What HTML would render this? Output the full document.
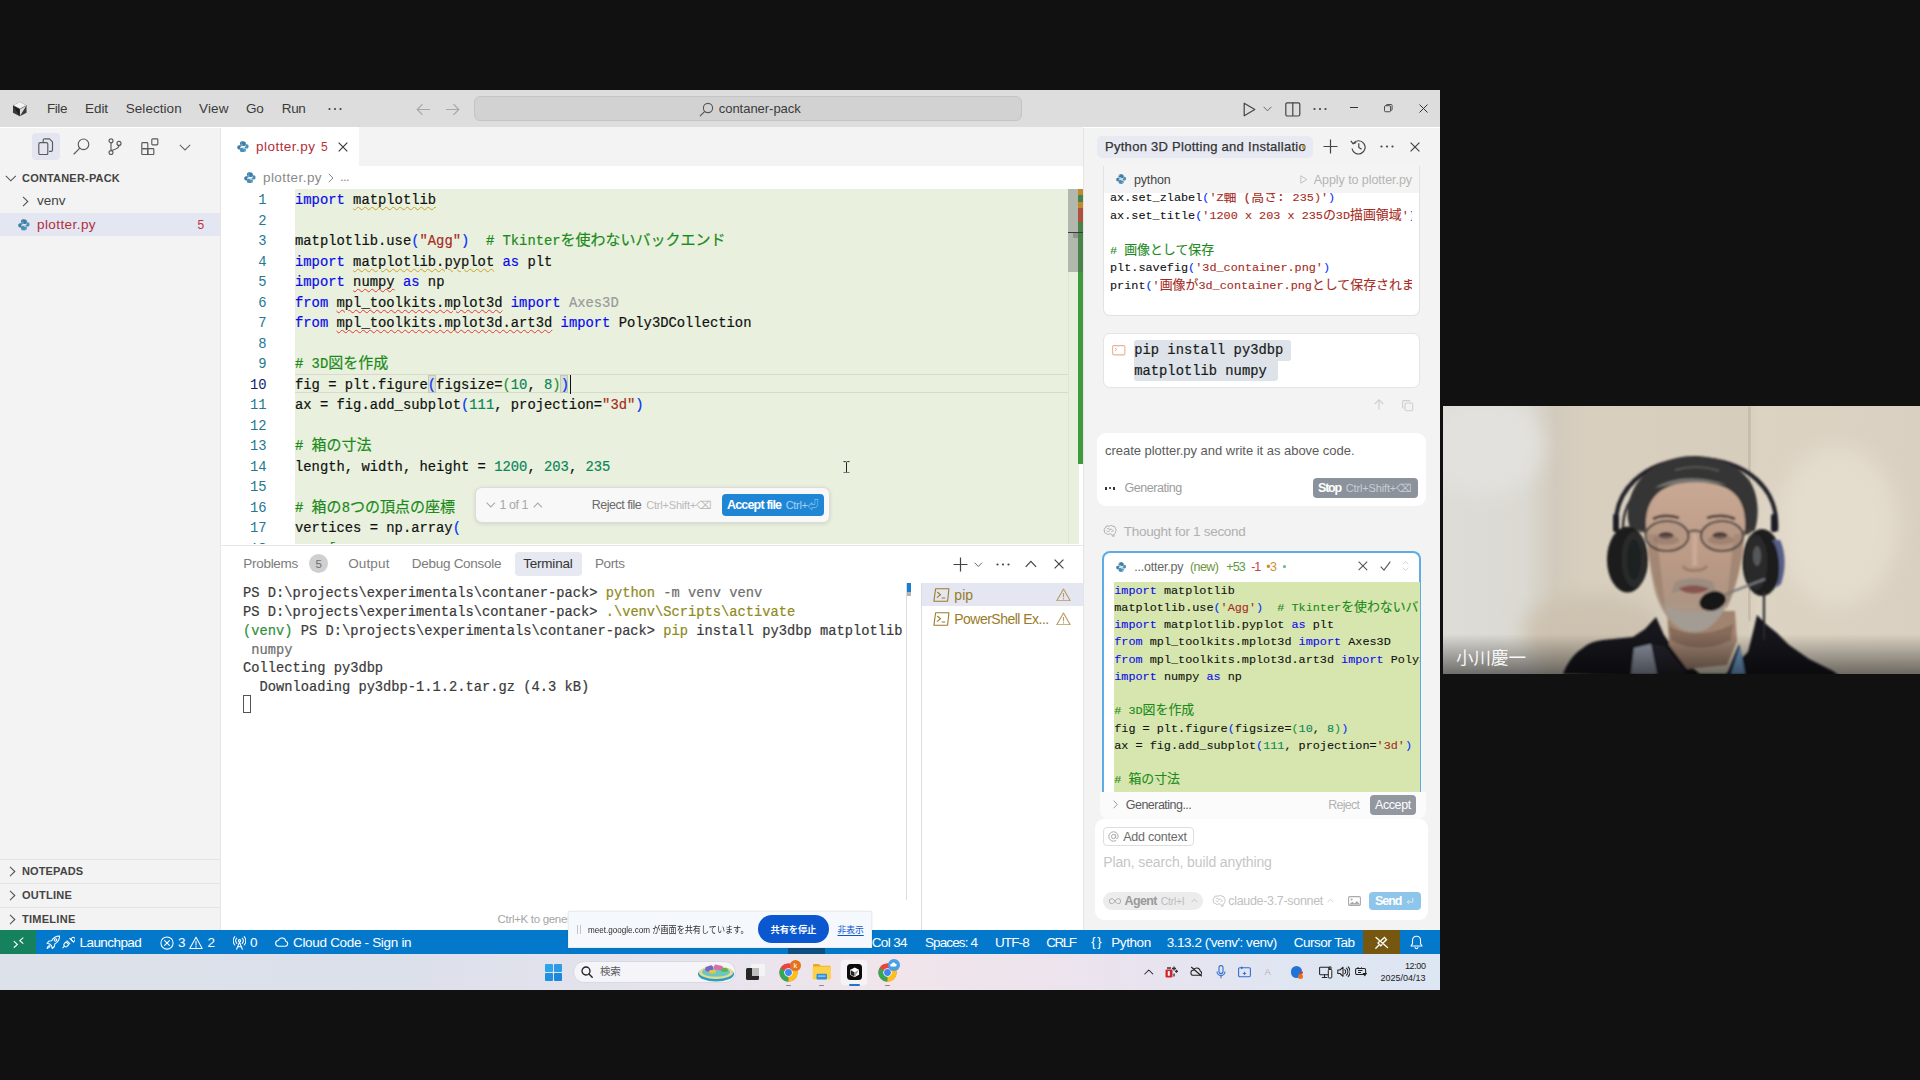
<!DOCTYPE html>
<html lang="ja"><head><meta charset="utf-8"><title>contaner-pack</title>
<style>
*{margin:0;padding:0;box-sizing:border-box}
html,body{width:1920px;height:1080px;overflow:hidden;background:#111}
body{position:relative;font-family:"Liberation Sans","Noto Sans CJK JP",sans-serif;font-size:13px;color:#333}
.a{position:absolute;display:block}
.t{position:absolute;white-space:pre;line-height:24px;height:24px;margin-top:-11.8px}
.m{font-family:"Liberation Mono","Noto Sans CJK JP",monospace}
.clip{position:absolute;overflow:hidden}
.code{position:absolute;white-space:pre;font-family:"Liberation Mono","Noto Sans CJK JP",monospace;color:#111;-webkit-text-stroke:.2px}
.code i{font-style:normal}
.ed{font-size:13.83px;line-height:20.5px}
.ed .j{font-size:15px;line-height:0}
.k{color:#0a0aee}.s{color:#a62b22}.n{color:#098658}.c{color:#1b8a1b}.b1{color:#0431fa}.b2{color:#319331}.g{color:#9a9a9a}
.wy{text-decoration:underline wavy #c9a227 1px;text-underline-offset:2px}
.wr{text-decoration:underline wavy #e03a3a 1px;text-underline-offset:2px}
.ln{position:absolute;text-align:right;white-space:pre;font-family:"Liberation Mono",monospace;font-size:13.83px;line-height:20.5px;color:#237893}
.tm{font-size:13.745px;line-height:18.75px;color:#3a3a3a}
.y{color:#8f8a1c}.a2{color:#6e6e6e}.gv{color:#2f8f3a}
.cc{font-size:11.83px;line-height:17.5px;-webkit-text-stroke:.1px}
.cc .j{font-size:12.9px;line-height:0}
.dc{font-size:11.82px;line-height:17.22px;-webkit-text-stroke:.1px}
.dc .j{font-size:12.9px;line-height:0}
.pp{font-size:13.8px;line-height:20.5px;color:#1a1a1a}

</style></head>
<body>
<div class="a" style="left:0px;top:90px;width:1440px;height:900px;background:#ffffff;"></div>
<div class="a" style="left:0px;top:90px;width:1440px;height:37.2px;background:#dddddd;"></div>
<svg class="a" style="left:11.5px;top:101px;" width="15.5" height="16" viewBox="0 0 16 16"><path d="M8 .6L15 4.3v7.6L8 15.5 1 11.9V4.3z" fill="#3a3a3a"></path><path d="M8 .6L15 4.3 8 8 1 4.3z" fill="#f2f2f2"></path><path d="M8 8l7-3.7L8 15.5z" fill="#d9d9d9"></path><path d="M8 8v7.5L1 4.3z" fill="#1e1e1e"></path><path d="M1 4.3L8 8l7-3.7" fill="none" stroke="#555" stroke-width=".5"></path></svg>
<span class="t" style="left: 47px; top: 109px; font-size: 13.5px; color: rgb(59, 59, 59); letter-spacing: -0.441px;">File</span>
<span class="t" style="left: 85px; top: 109px; font-size: 13.5px; color: rgb(59, 59, 59); letter-spacing: -0.066px;">Edit</span>
<span class="t" style="left: 125.75px; top: 109px; font-size: 13.5px; color: rgb(59, 59, 59); letter-spacing: 0.05px;">Selection</span>
<span class="t" style="left: 199px; top: 109px; font-size: 13.5px; color: rgb(59, 59, 59); letter-spacing: 0.18px;">View</span>
<span class="t" style="left: 246px; top: 109px; font-size: 13.5px; color: rgb(59, 59, 59); letter-spacing: -0.133px;">Go</span>
<span class="t" style="left: 281.75px; top: 109px; font-size: 13.5px; color: rgb(59, 59, 59); letter-spacing: -0.339px;">Run</span>
<svg class="a" style="left:328px;top:106px;" width="14" height="6" viewBox="0 0 14 6"><circle cx="1.5" cy="3" r="1.1" fill="#444"></circle><circle cx="7" cy="3" r="1.1" fill="#444"></circle><circle cx="12.5" cy="3" r="1.1" fill="#444"></circle></svg>
<svg class="a" style="left:415.5px;top:103px;" width="15" height="13" viewBox="0 0 15 13"><path d="M14 6.5H1.5M6.5 1.2L1.2 6.5l5.3 5.3" fill="none" stroke="#a8a8a8" stroke-width="1.2"></path></svg>
<svg class="a" style="left:444.5px;top:103px;" width="15" height="13" viewBox="0 0 15 13"><path d="M1 6.5h12.5M8.5 1.2l5.3 5.3-5.3 5.3" fill="none" stroke="#a8a8a8" stroke-width="1.2"></path></svg>
<div class="a" style="left:473.5px;top:96px;width:548.5px;height:25px;background:#d2d2d2;border:1px solid #c4c4c4;border-radius:6px"></div>
<svg class="a" style="left:699px;top:101.5px;" width="15" height="15" viewBox="0 0 15 15"><circle cx="9" cy="6" r="4.6" fill="none" stroke="#555" stroke-width="1.1"></circle><path d="M5.8 9.4L1 14.2" stroke="#555" stroke-width="1.2"></path></svg>
<span class="t" style="left: 718.75px; top: 109px; font-size: 13px; color: rgb(59, 59, 59); letter-spacing: -0.03px;">contaner-pack</span>
<svg class="a" style="left:1243px;top:102px;" width="13" height="15" viewBox="0 0 13 15"><path d="M1.2 1.2v12.6l10.6-6.3z" fill="none" stroke="#444" stroke-width="1.2" stroke-linejoin="round"></path></svg>
<svg class="a" style="left:1262.5px;top:106px;" width="9" height="6" viewBox="0 0 9 6"><path d="M.6 .8l3.9 4 3.9-4" fill="none" stroke="#666" stroke-width="1"></path></svg>
<svg class="a" style="left:1284.5px;top:101.5px;" width="16" height="15" viewBox="0 0 16 15"><rect x=".8" y=".8" width="14" height="13.2" rx="1.5" fill="none" stroke="#444" stroke-width="1.2"></rect><path d="M7.8 .8v13.2" stroke="#444" stroke-width="1.2"></path></svg>
<svg class="a" style="left:1313px;top:106px;" width="14" height="6" viewBox="0 0 14 6"><circle cx="1.5" cy="3" r="1.1" fill="#444"></circle><circle cx="7" cy="3" r="1.1" fill="#444"></circle><circle cx="12.5" cy="3" r="1.1" fill="#444"></circle></svg>
<div class="a" style="left:1350px;top:107px;width:8px;height:1px;background:#333;"></div>
<svg class="a" style="left:1384px;top:104px;" width="8.6" height="8.6" viewBox="0 0 10 10"><rect x=".6" y="2" width="7" height="7" rx="1.2" fill="none" stroke="#333" stroke-width="1"></rect><path d="M2.6 2V1.6c0-.6.4-1 1-1h4.8c.6 0 1 .4 1 1v4.8c0 .6-.4 1-1 1H7.6" fill="none" stroke="#333" stroke-width="1"></path></svg>
<svg class="a" style="left:1418.5px;top:104px;" width="9" height="9" viewBox="0 0 9 9"><path d="M.5 .5l8 8M8.500 .5l-8 8" stroke="#333" stroke-width="1"></path></svg>
<div class="a" style="left:0px;top:127.5px;width:220.7px;height:802.5px;background:#f3f3f3;"></div>
<div class="a" style="left:220.2px;top:127.5px;width:0.8px;height:802.5px;background:#e7e7e7;"></div>
<div class="a" style="left:32.3px;top:133px;width:27.4px;height:27px;background:#e3e5f0;border-radius:4px"></div>
<svg class="a" style="left:37.5px;top:137.5px;" width="16" height="17.5" viewBox="0 0 16 17.5"><path d="M5.2 3.8V2.2c0-.8.6-1.4 1.400-1.400h4.900l3 3v8.200c0 .8-.6 1.400-1.400 1.400h-1.600" fill="none" stroke="#5a5a5a" stroke-width="1.15" stroke-linejoin="round" stroke-linecap="round"></path><path d="M2.200 4.600h6.200c.8 0 1.400.6 1.400 1.400v9.200c0 .8-.6 1.400-1.400 1.400H2.200c-.8 0-1.400-.6-1.400-1.400V6c0-.8.6-1.400 1.400-1.400z" fill="none" stroke="#5a5a5a" stroke-width="1.15" stroke-linejoin="round" stroke-linecap="round"></path></svg>
<svg class="a" style="left:72.5px;top:137.5px;" width="17" height="17" viewBox="0 0 17 17"><circle cx="10.5" cy="6.3" r="5.300" fill="none" stroke="#5a5a5a" stroke-width="1.15" stroke-linejoin="round" stroke-linecap="round"></circle><path d="M6.800 10.200L1 16" fill="none" stroke="#5a5a5a" stroke-width="1.15" stroke-linejoin="round" stroke-linecap="round"></path></svg>
<svg class="a" style="left:108px;top:137.5px;" width="14" height="17.5" viewBox="0 0 14 17.5"><circle cx="3" cy="2.800" r="2" fill="none" stroke="#5a5a5a" stroke-width="1.15" stroke-linejoin="round" stroke-linecap="round"></circle><circle cx="3" cy="14.600" r="2" fill="none" stroke="#5a5a5a" stroke-width="1.15" stroke-linejoin="round" stroke-linecap="round"></circle><circle cx="11" cy="5.400" r="2" fill="none" stroke="#5a5a5a" stroke-width="1.15" stroke-linejoin="round" stroke-linecap="round"></circle><path d="M3 4.800v7.800M11 7.400c0 3.200-3.500 3.600-7.400 5" fill="none" stroke="#5a5a5a" stroke-width="1.15" stroke-linejoin="round" stroke-linecap="round"></path></svg>
<svg class="a" style="left:140.5px;top:137.5px;" width="18" height="17.5" viewBox="0 0 18 17.5"><rect x=".8" y="4.600" width="6" height="6" rx=".8" fill="none" stroke="#5a5a5a" stroke-width="1.15" stroke-linejoin="round" stroke-linecap="round"></rect><rect x=".8" y="10.600" width="6" height="6" rx=".8" fill="none" stroke="#5a5a5a" stroke-width="1.15" stroke-linejoin="round" stroke-linecap="round"></rect><rect x="6.800" y="10.600" width="6" height="6" rx=".8" fill="none" stroke="#5a5a5a" stroke-width="1.15" stroke-linejoin="round" stroke-linecap="round"></rect><rect x="10.800" y=".8" width="6" height="6" rx=".8" fill="none" stroke="#5a5a5a" stroke-width="1.15" stroke-linejoin="round" stroke-linecap="round"></rect></svg>
<svg class="a" style="left:178.5px;top:143.5px;" width="12" height="7" viewBox="0 0 12 7"><path d="M.8 .8l5.2 5.200 5.200-5.200" fill="none" stroke="#666" stroke-width="1.1"></path></svg>
<svg class="a" style="left:5px;top:174.5px;" width="12" height="7" viewBox="0 0 12 7"><path d="M.8 .8l5 5 5-5" fill="none" stroke="#555" stroke-width="1.1"></path></svg>
<span class="t" style="left: 22px; top: 178px; font-size: 11px; color: rgb(68, 68, 68); font-weight: 700; letter-spacing: 0.19px;">CONTANER-PACK</span>
<svg class="a" style="left:21.5px;top:195.5px;" width="7" height="11" viewBox="0 0 7 11"><path d="M1 .8l4.800 4.700L1 10.200" fill="none" stroke="#555" stroke-width="1.1"></path></svg>
<span class="t" style="left: 37px; top: 201px; font-size: 13.5px; color: rgb(68, 68, 68); letter-spacing: -0.008px;">venv</span>
<div class="a" style="left:0px;top:213px;width:220.2px;height:22.7px;background:#e4e6f1;"></div>
<svg class="a" style="left:18px;top:218.8px;" width="11.8" height="11.8" viewBox="0 0 16 16"><path fill="#3d7ea6" fill-rule="evenodd" d="M7.900 .4C5.500 .4 4 1.300 4 3v2h4v.7H2.800C1.200 5.700 .300 7 .300 8.600c0 1.700.9 2.900 2.400 2.900h1.700V9.300c0-1.400 1.100-2.500 2.500-2.500h3.200c1.100 0 1.900-.8 1.900-1.900V3c0-1.600-1.600-2.600-4.100-2.600zM5.800 1.900a.65.65 0 110 1.300.65.65 0 010-1.300z"></path><path fill="#4a8fb8" fill-rule="evenodd" transform="rotate(180 8 8)" d="M7.900 .4C5.500 .4 4 1.300 4 3v2h4v.7H2.800C1.200 5.700 .300 7 .300 8.600c0 1.700.9 2.900 2.400 2.900h1.700V9.300c0-1.400 1.100-2.500 2.500-2.500h3.200c1.100 0 1.900-.8 1.900-1.900V3c0-1.600-1.600-2.600-4.100-2.600zM5.800 1.900a.65.65 0 110 1.300.65.65 0 010-1.300z"></path></svg>
<span class="t" style="left: 37px; top: 224.5px; font-size: 13.5px; color: rgb(176, 48, 58); letter-spacing: 0.42px;">plotter.py</span>
<span class="t" style="left: 197.5px; top: 224.5px; font-size: 12px; color: rgb(192, 48, 58); letter-spacing: -0.188px;">5</span>
<div class="a" style="left:0px;top:859.25px;width:220.2px;height:1px;background:#e2e2e2;"></div>
<svg class="a" style="left:8.5px;top:865.75px;" width="7" height="11" viewBox="0 0 7 11"><path d="M1 .8l4.800 4.700L1 10.200" fill="none" stroke="#555" stroke-width="1.1"></path></svg>
<span class="t" style="left: 22px; top: 870.85px; font-size: 11px; color: rgb(68, 68, 68); font-weight: 700; letter-spacing: 0.117px;">NOTEPADS</span>
<div class="a" style="left:0px;top:883.25px;width:220.2px;height:1px;background:#e2e2e2;"></div>
<svg class="a" style="left:8.5px;top:889.75px;" width="7" height="11" viewBox="0 0 7 11"><path d="M1 .8l4.800 4.700L1 10.200" fill="none" stroke="#555" stroke-width="1.1"></path></svg>
<span class="t" style="left: 22px; top: 894.85px; font-size: 11px; color: rgb(68, 68, 68); font-weight: 700; letter-spacing: 0.246px;">OUTLINE</span>
<div class="a" style="left:0px;top:907px;width:220.2px;height:1px;background:#e2e2e2;"></div>
<svg class="a" style="left:8.5px;top:913.5px;" width="7" height="11" viewBox="0 0 7 11"><path d="M1 .8l4.800 4.700L1 10.200" fill="none" stroke="#555" stroke-width="1.1"></path></svg>
<span class="t" style="left: 22px; top: 918.6px; font-size: 11px; color: rgb(68, 68, 68); font-weight: 700; letter-spacing: 0.27px;">TIMELINE</span>
<div class="a" style="left:221px;top:127.2px;width:862px;height:38.4px;background:#f3f3f3;"></div>
<div class="a" style="left:221px;top:127.2px;width:137.5px;height:38.4px;background:#ffffff;"></div>
<svg class="a" style="left:237px;top:140.5px;" width="11.8" height="11.8" viewBox="0 0 16 16"><path fill="#3d7ea6" fill-rule="evenodd" d="M7.900 .4C5.500 .4 4 1.300 4 3v2h4v.7H2.800C1.200 5.700 .300 7 .300 8.600c0 1.700.9 2.900 2.400 2.900h1.700V9.300c0-1.400 1.100-2.500 2.500-2.500h3.200c1.100 0 1.900-.8 1.900-1.900V3c0-1.600-1.600-2.600-4.100-2.600zM5.800 1.900a.65.65 0 110 1.300.65.65 0 010-1.300z"></path><path fill="#4a8fb8" fill-rule="evenodd" transform="rotate(180 8 8)" d="M7.900 .4C5.500 .4 4 1.300 4 3v2h4v.7H2.800C1.200 5.700 .300 7 .300 8.600c0 1.700.9 2.900 2.400 2.900h1.700V9.300c0-1.400 1.100-2.500 2.500-2.500h3.200c1.100 0 1.900-.8 1.900-1.900V3c0-1.600-1.600-2.600-4.100-2.600zM5.800 1.900a.65.65 0 110 1.300.65.65 0 010-1.300z"></path></svg>
<span class="t" style="left: 256px; top: 147px; font-size: 13.5px; color: rgb(176, 48, 58); letter-spacing: 0.47px;">plotter.py</span>
<span class="t" style="left: 321px; top: 147px; font-size: 12px; color: rgb(192, 48, 58); letter-spacing: -0.188px;">5</span>
<svg class="a" style="left:338px;top:142px;" width="10" height="10" viewBox="0 0 10 10"><path d="M.7 .7l8.600 8.600M9.300 .7L.7 9.300" stroke="#333" stroke-width="1.1"></path></svg>
<div class="a" style="left:221px;top:165.6px;width:862px;height:23.6px;background:#ffffff;"></div>
<svg class="a" style="left:244px;top:171.5px;" width="11.8" height="11.8" viewBox="0 0 16 16"><path fill="#3d7ea6" fill-rule="evenodd" d="M7.900 .4C5.500 .4 4 1.300 4 3v2h4v.7H2.800C1.200 5.700 .300 7 .300 8.600c0 1.700.9 2.900 2.400 2.900h1.700V9.300c0-1.400 1.100-2.500 2.500-2.500h3.200c1.100 0 1.900-.8 1.900-1.900V3c0-1.600-1.600-2.600-4.100-2.600zM5.800 1.900a.65.65 0 110 1.300.65.65 0 010-1.300z"></path><path fill="#4a8fb8" fill-rule="evenodd" transform="rotate(180 8 8)" d="M7.900 .4C5.500 .4 4 1.300 4 3v2h4v.7H2.800C1.200 5.700 .300 7 .300 8.600c0 1.700.9 2.900 2.400 2.900h1.700V9.300c0-1.400 1.100-2.500 2.500-2.500h3.200c1.100 0 1.900-.8 1.900-1.900V3c0-1.600-1.600-2.600-4.100-2.600zM5.800 1.900a.65.65 0 110 1.300.65.65 0 010-1.300z"></path></svg>
<span class="t" style="left: 263px; top: 178px; font-size: 13.5px; color: rgb(138, 138, 138); letter-spacing: 0.42px;">plotter.py</span>
<svg class="a" style="left:328px;top:173px;" width="6" height="10" viewBox="0 0 6 10"><path d="M.8 .8l4.2 4.200L.8 9.200" fill="none" stroke="#8a8a8a" stroke-width="1"></path></svg>
<span class="t" style="left: 340px; top: 177px; font-size: 13px; color: rgb(138, 138, 138); letter-spacing: -0.615px;">...</span>
<div class="clip" style="left:221px;top:189.2px;width:862px;height:355.3px;background:#fff">
<div class="a" style="left:73.5px;top:0;width:784px;height:356px;background:#e9f1de"></div>
<div class="a" style="left:73.5px;top:185px;width:774px;height:19px;border-top:1px solid #d6dccb;border-bottom:1px solid #d6dccb"></div>
<div class="a" style="left:206.5px;top:186px;width:8.800px;height:18px;background:#d9dfd0;border:1px solid #c3c9ba"></div>
<div class="a" style="left:338.700px;top:186px;width:8.800px;height:18px;background:#d9dfd0;border:1px solid #c3c9ba"></div>
<div class="ln" style="left:0;top:1.2px;width:45.5px">1
2
3
4
5
6
7
8
9
10
11
12
13
14
15
16
17
18</div>
<div class="ln" style="left:0;top:185.7px;width:45.5px;color:#0b216f;background:#fff">10</div>
<div class="code ed" style="left:74px;top:1.2px"><i class="k">import</i> <i class="wy">matplotlib</i>

matplotlib.use<i class="b1">(</i><i class="s">"Agg"</i><i class="b1">)</i>  <i class="c"># Tkinter<i class="j">を使わないバックエンド</i></i>
<i class="k">import</i> <i class="wy">matplotlib.pyplot</i> <i class="k">as</i> plt
<i class="k">import</i> <i class="wr">numpy</i> <i class="k">as</i> np
<i class="k">from</i> <i class="wr">mpl_toolkits.mplot3d</i> <i class="k">import</i> <i class="g">Axes3D</i>
<i class="k">from</i> <i class="wr">mpl_toolkits.mplot3d.art3d</i> <i class="k">import</i> Poly3DCollection

<i class="c"># 3D<i class="j">図を作成</i></i>
fig = plt.figure<i class="b1">(</i>figsize=<i class="b2">(</i><i class="n">10</i>, <i class="n">8</i><i class="b2">)</i><i class="b1">)</i>
ax = fig.add_subplot<i class="b1">(</i><i class="n">111</i>, projection=<i class="s">"3d"</i><i class="b1">)</i>

<i class="c"># <i class="j">箱の寸法</i></i>
length, width, height = <i class="n">1200</i>, <i class="n">203</i>, <i class="n">235</i>

<i class="c"># <i class="j">箱の</i>8<i class="j">つの頂点の座標</i></i>
vertices = np.array<i class="b1">(</i>
    <i class="b2">[</i></div>
<div class="a" style="left:348.5px;top:185.5px;width:1.5px;height:19px;background:#111"></div>
<div class="a" style="left:847px;top:0;width:1px;height:356px;background:#dfe6d4"></div>
<div class="a" style="left:847.2px;top:0;width:10px;height:82.5px;background:#b3b8ae"></div>
<div class="a" style="left:857px;top:0;width:5px;height:275.3px;background:#3d9a3d"></div>
<div class="a" style="left:857px;top:0;width:5px;height:82.5px;background:#4b8249"></div>
<div class="a" style="left:857px;top:0;width:5px;height:5.600px;background:#c08a2c"></div>
<div class="a" style="left:857px;top:12.800px;width:5px;height:5.800px;background:#c08a2c"></div>
<div class="a" style="left:857px;top:18.600px;width:5px;height:14.300px;background:#ad5040"></div>
<div class="a" style="left:847.2px;top:42.800px;width:14.800px;height:1.2px;background:#3a3a3a"></div>
<div class="a" style="left:852px;top:44px;width:5px;height:4.500px;background:#8f978d"></div>
</div>
<div class="a" style="left:474.5px;top:486.5px;width:355.5px;height:36px;background:#f8f8f8;border:1px solid #dcdcdc;border-radius:7px;box-shadow:0 1px 4px rgba(0,0,0,.12)"></div>
<svg class="a" style="left:485.5px;top:501.5px;" width="10" height="6" viewBox="0 0 10 6"><path d="M.6 .7l4.200 4.200L9 .7" fill="none" stroke="#aaa" stroke-width="1.1"></path></svg>
<span class="t" style="left: 499.5px; top: 505px; font-size: 12.5px; color: rgb(168, 168, 168); letter-spacing: -0.464px;">1 of 1</span>
<svg class="a" style="left:532.5px;top:501.5px;" width="10" height="6" viewBox="0 0 10 6"><path d="M.6 5.300l4.200-4.200L9 5.300" fill="none" stroke="#aaa" stroke-width="1.1"></path></svg>
<span class="t" style="left: 591.75px; top: 505px; font-size: 12.5px; color: rgb(106, 106, 106); letter-spacing: -0.49px;">Reject file</span>
<span class="t" style="left: 646.25px; top: 505px; font-size: 11px; color: rgb(184, 184, 184); letter-spacing: -0.206px;">Ctrl+Shift+⌫</span>
<div class="a" style="left:721.75px;top:494.25px;width:102px;height:21.5px;background:#1f86d6;border-radius:4px"></div>
<span class="t" style="left: 727px; top: 505px; font-size: 12.5px; color: rgb(255, 255, 255); font-weight: 700; letter-spacing: -0.815px;">Accept file</span>
<span class="t" style="left: 785.75px; top: 505px; font-size: 11px; color: rgb(169, 210, 242); letter-spacing: -0.339px;">Ctrl+⏎</span>
<svg class="a" style="left:843px;top:460.5px;" width="7" height="12.5" viewBox="0 0 7 12.5"><path d="M.5 .6h2.200l.8.700.8-.7h2.200M.5 11.900h2.200l.8-.7.8.7h2.200M3.500 1.300v9.900" fill="none" stroke="#222" stroke-width="1"></path></svg>
<div class="a" style="left:221px;top:544.5px;width:862px;height:385.5px;background:#ffffff;"></div>
<div class="a" style="left:221px;top:544.5px;width:862px;height:1px;background:#e6e6e6;"></div>
<span class="t" style="left: 243.25px; top: 563.75px; font-size: 13.5px; color: rgb(124, 124, 124); letter-spacing: -0.285px;">Problems</span>
<div class="a" style="left:309.25px;top:554.25px;width:19px;height:19px;background:#cfcfcf;border-radius:50%"></div>
<span class="t" style="left: 315.5px; top: 563.75px; font-size: 11.5px; color: rgb(111, 111, 111); letter-spacing: 0.094px;">5</span>
<span class="t" style="left: 348.25px; top: 563.75px; font-size: 13.5px; color: rgb(124, 124, 124); letter-spacing: 0.12px;">Output</span>
<span class="t" style="left: 411.75px; top: 563.75px; font-size: 13.5px; color: rgb(124, 124, 124); letter-spacing: -0.275px;">Debug Console</span>
<div class="a" style="left:515px;top:552px;width:66.75px;height:23.5px;background:#e6e8f2;border-radius:4px"></div>
<span class="t" style="left: 523.25px; top: 563.75px; font-size: 13.5px; color: rgb(51, 51, 51); letter-spacing: -0.221px;">Terminal</span>
<span class="t" style="left: 595px; top: 563.75px; font-size: 13.5px; color: rgb(124, 124, 124); letter-spacing: -0.403px;">Ports</span>
<svg class="a" style="left:952.5px;top:556.5px;" width="15" height="15" viewBox="0 0 15 15"><path d="M7.500 .5v14M.5 7.500h14" stroke="#444" stroke-width="1.2"></path></svg>
<svg class="a" style="left:973.5px;top:561.5px;" width="9" height="6" viewBox="0 0 9 6"><path d="M.6 .7l3.700 3.800L8 .7" fill="none" stroke="#666" stroke-width="1"></path></svg>
<svg class="a" style="left:995.5px;top:561.5px;" width="14" height="5" viewBox="0 0 14 5"><circle cx="1.5" cy="2.500" r="1.1" fill="#444"></circle><circle cx="7" cy="2.500" r="1.1" fill="#444"></circle><circle cx="12.5" cy="2.500" r="1.1" fill="#444"></circle></svg>
<svg class="a" style="left:1024.5px;top:559.5px;" width="12" height="8" viewBox="0 0 12 8"><path d="M.7 6.800l5.200-5.500 5.200 5.500" fill="none" stroke="#444" stroke-width="1.2"></path></svg>
<svg class="a" style="left:1053.5px;top:559px;" width="10" height="10" viewBox="0 0 10 10"><path d="M.6 .6l8.800 8.800M9.400 .6L.6 9.400" stroke="#444" stroke-width="1.2"></path></svg>
<div class="code tm" style="left:243px;top:585.3px">PS D:\projects\experimentals\contaner-pack&gt; <i class="y">python</i> <i class="a2">-m venv venv</i>
PS D:\projects\experimentals\contaner-pack&gt; <i class="y">.\venv\Scripts\activate</i>
<i class="gv">(venv)</i> PS D:\projects\experimentals\contaner-pack&gt; <i class="y">pip</i> install py3dbp matplotlib
<i class="a2"> numpy</i>
Collecting py3dbp
  Downloading py3dbp-1.1.2.tar.gz (4.3 kB)</div>
<div class="a" style="left:243px;top:695px;width:8.200px;height:17.500px;border:1px solid #555"></div>
<div class="a" style="left:906.25px;top:583px;width:0.8px;height:317px;background:#dcdcdc;"></div>
<div class="a" style="left:906.5px;top:583px;width:4.8px;height:8.8px;background:#1a7fd4;"></div>
<div class="a" style="left:906.5px;top:591.8px;width:4.8px;height:4.5px;background:#b5b5b5;"></div>
<div class="a" style="left:921.25px;top:583px;width:0.8px;height:347px;background:#dcdcdc;"></div>
<div class="a" style="left:922px;top:583px;width:161px;height:23.3px;background:#e4e6f1;"></div>
<svg class="a" style="left:933px;top:588px;" width="17" height="14" viewBox="0 0 17 14"><path d="M2.600 .7h13.300l-1.300 12.600H.9z" fill="none" stroke="#9a7b28" stroke-width="1.1" stroke-linejoin="round"></path><path d="M4.300 4l3.200 2.800-3.600 2.800M8.600 10h3.600" fill="none" stroke="#9a7b28" stroke-width="1.1"></path></svg>
<span class="t" style="left: 954.25px; top: 594.75px; font-size: 14px; color: rgb(154, 123, 40); letter-spacing: 0.104px;">pip</span>
<svg class="a" style="left:1056px;top:587.5px;" width="15" height="13.5" viewBox="0 0 15 13.5"><path d="M7.500 1L14.200 12.700H.8z" fill="none" stroke="#b59a62" stroke-width="1.1" stroke-linejoin="round"></path><path d="M7.500 5v4.200M7.500 10.300v1.200" stroke="#b59a62" stroke-width="1.1"></path></svg>
<svg class="a" style="left:933px;top:611.5px;" width="17" height="14" viewBox="0 0 17 14"><path d="M2.600 .7h13.300l-1.300 12.600H.9z" fill="none" stroke="#9a7b28" stroke-width="1.1" stroke-linejoin="round"></path><path d="M4.300 4l3.200 2.800-3.600 2.800M8.600 10h3.600" fill="none" stroke="#9a7b28" stroke-width="1.1"></path></svg>
<span class="t" style="left: 954.25px; top: 618.5px; font-size: 14px; color: rgb(154, 123, 40); letter-spacing: -0.514px;">PowerShell Ex...</span>
<svg class="a" style="left:1056px;top:611.5px;" width="15" height="13.5" viewBox="0 0 15 13.5"><path d="M7.500 1L14.200 12.700H.8z" fill="none" stroke="#b59a62" stroke-width="1.1" stroke-linejoin="round"></path><path d="M7.500 5v4.200M7.500 10.300v1.200" stroke="#b59a62" stroke-width="1.1"></path></svg>
<span class="t" style="left: 497.5px; top: 919.25px; font-size: 11.5px; color: rgb(166, 166, 166); letter-spacing: -0.31px;">Ctrl+K to gene</span>
<span class="t" style="left: 567.2px; top: 919.25px; font-size: 11.5px; color: rgb(166, 166, 166); letter-spacing: -0.722px;">rate a command</span>
<div class="a" style="left:1083px;top:127.5px;width:357px;height:802.5px;background:#f3f3f3;"></div>
<div class="a" style="left:1083px;top:127.5px;width:0.8px;height:802.5px;background:#e4e4e4;"></div>
<div class="a" style="left:1097px;top:135.5px;width:216px;height:22px;background:#e7eaf2;border-radius:5px"></div>
<span class="t" style="left: 1105px; top: 146.5px; font-size: 13px; color: rgb(51, 51, 51); -webkit-text-stroke: 0.25px rgb(51, 51, 51); letter-spacing: 0.279px;">Python 3D Plotting and Installatio</span>
<div class="a" style="left:1301.5px;top:145.2px;width:3.6px;height:3.6px;background:#e09a20;border-radius:50%"></div>
<svg class="a" style="left:1323px;top:139px;" width="15" height="15" viewBox="0 0 15 15"><path d="M7.500 .5v14M.5 7.500h14" stroke="#444" stroke-width="1.2"></path></svg>
<svg class="a" style="left:1350px;top:138.5px;" width="17" height="16" viewBox="0 0 17 16"><path d="M3.300 4.300A6.600 6.600 0 1 1 2 9.500" fill="none" stroke="#444" stroke-width="1.2"></path><path d="M.8 1.800l2.300 3 3.200-1.300" fill="none" stroke="#444" stroke-width="1.2"></path><path d="M8.800 4.300v4.200l2.800 1.800" fill="none" stroke="#444" stroke-width="1.2"></path></svg>
<svg class="a" style="left:1380px;top:144px;" width="14" height="5" viewBox="0 0 14 5"><circle cx="1.5" cy="2.500" r="1.1" fill="#444"></circle><circle cx="7" cy="2.500" r="1.1" fill="#444"></circle><circle cx="12.5" cy="2.500" r="1.1" fill="#444"></circle></svg>
<svg class="a" style="left:1410px;top:141.5px;" width="10" height="10" viewBox="0 0 10 10"><path d="M.6 .6l8.800 8.800M9.400 .6L.6 9.400" stroke="#444" stroke-width="1.2"></path></svg>
<div class="clip" style="left:1102.5px;top:166px;width:317.5px;height:150px;background:#fff;border:1px solid #e2e2e2;border-top:0;border-radius:0 0 7px 7px">
<div class="a" style="left:0;top:0;width:317px;height:26px;background:#f3f3f3;border-bottom:1px solid #ececec"></div>
<div class="clip" style="left:6.500px;top:21.5px;width:302px;height:110px"><div class="code cc" style="left:0;top:2.5px">ax.set_zlabel<i class="b1">(</i><i class="s">'Z<i class="j">軸</i> <i class="j">(高さ: </i>235)'</i><i class="b1">)</i>
ax.set_title<i class="b1">(</i><i class="s">'1200 x 203 x 235<i class="j">の</i>3D<i class="j">描画領域</i>'</i><i class="b1">)</i>

<i class="c"># <i class="j">画像として保存</i></i>
plt.savefig<i class="b1">(</i><i class="s">'3d_container.png'</i><i class="b1">)</i>
print<i class="b1">(</i><i class="s">'<i class="j">画像が</i>3d_container.png<i class="j">として保存されました</i>'</i><i class="b1">)</i></div></div>
<div class="a" style="left:0;top:0;width:317px;height:26.500px;background:#f4f4f4"></div>
</div>
<svg class="a" style="left:1116px;top:174.3px;" width="10.2" height="10.2" viewBox="0 0 16 16"><path fill="#3d7ea6" fill-rule="evenodd" d="M7.900 .4C5.500 .4 4 1.300 4 3v2h4v.7H2.800C1.200 5.700 .300 7 .300 8.600c0 1.700.9 2.900 2.400 2.900h1.700V9.300c0-1.400 1.100-2.500 2.500-2.500h3.200c1.100 0 1.900-.8 1.900-1.900V3c0-1.600-1.600-2.600-4.100-2.600zM5.800 1.900a.65.65 0 110 1.300.65.65 0 010-1.300z"></path><path fill="#4a8fb8" fill-rule="evenodd" transform="rotate(180 8 8)" d="M7.900 .4C5.500 .4 4 1.300 4 3v2h4v.7H2.800C1.200 5.700 .300 7 .300 8.600c0 1.700.9 2.900 2.400 2.900h1.700V9.300c0-1.400 1.100-2.500 2.500-2.500h3.200c1.100 0 1.900-.8 1.900-1.900V3c0-1.600-1.600-2.600-4.100-2.600zM5.800 1.900a.65.65 0 110 1.300.65.65 0 010-1.300z"></path></svg>
<span class="t" style="left: 1134px; top: 180.2px; font-size: 12.5px; color: rgb(68, 68, 68); letter-spacing: -0.172px;">python</span>
<svg class="a" style="left:1299.5px;top:175.2px;" width="8" height="9" viewBox="0 0 8 9"><path d="M.8 .8v7.400l6-3.700z" fill="none" stroke="#c2c2c2" stroke-width="1"></path></svg>
<span class="t" style="left: 1313.75px; top: 180.2px; font-size: 12.5px; color: rgb(180, 180, 180); letter-spacing: -0.059px;">Apply to plotter.py</span>
<div class="a" style="left:1102.5px;top:332.5px;width:317.5px;height:55px;background:#fff;border:1px solid #e4e4e4;border-radius:7px"></div>
<svg class="a" style="left:1112px;top:345px;" width="13.5" height="10.5" viewBox="0 0 13.5 10.5"><rect x=".6" y=".6" width="12.300" height="9.300" rx="1.3" fill="none" stroke="#e6b595" stroke-width="1.1"></rect><path d="M2.800 3l2 1.500-2 1.500" fill="none" stroke="#e6b595" stroke-width="1"></path></svg>
<div class="a" style="left:1134px;top:340px;width:157px;height:20.5px;background:#dde3e9;border-radius:3px 3px 3px 0"></div>
<div class="a" style="left:1134px;top:360px;width:143.5px;height:20.7px;background:#dde3e9;border-radius:0 0 3px 3px"></div>
<div class="code pp" style="left:1134.25px;top:341.3px">pip install py3dbp
matplotlib numpy</div>
<svg class="a" style="left:1373.5px;top:399px;" width="10" height="11" viewBox="0 0 10 11"><path d="M5 10.500V.9M.8 5l4.200-4.200L9.200 5" fill="none" stroke="#cfcfcf" stroke-width="1.1"></path></svg>
<svg class="a" style="left:1402px;top:400px;" width="11.5" height="11.5" viewBox="0 0 11.5 11.5"><rect x="3" y="3" width="7.800" height="7.800" rx="1.5" fill="none" stroke="#cfcfcf" stroke-width="1.1"></rect><path d="M8 1.600C8 1 7.600 .6 7 .6H1.600C1 .6 .6 1 .6 1.600V7c0 .6.400 1 1 1" fill="none" stroke="#cfcfcf" stroke-width="1.1"></path></svg>
<div class="a" style="left:1097px;top:432.5px;width:329px;height:73.5px;background:#fff;border-radius:9px"></div>
<span class="t" style="left: 1105px; top: 450.75px; font-size: 13px; color: rgb(92, 92, 92); letter-spacing: -0.028px;">create plotter.py and write it as above code.</span>
<div class="a" style="left:1105px;top:486.5px;width:2px;height:3px;background:#333;"></div>
<div class="a" style="left:1109.2px;top:487.3px;width:1.6px;height:1.6px;background:#555;"></div>
<div class="a" style="left:1113.2px;top:486.5px;width:2px;height:3px;background:#333;"></div>
<span class="t" style="left: 1124.5px; top: 488px; font-size: 12.5px; color: rgb(156, 156, 156); letter-spacing: -0.461px;">Generating</span>
<div class="a" style="left:1312.5px;top:478px;width:105.5px;height:19.5px;background:#8b929b;border-radius:4px"></div>
<span class="t" style="left: 1318px; top: 488px; font-size: 12.5px; color: rgb(255, 255, 255); font-weight: 700; letter-spacing: -1.195px;">Stop</span>
<span class="t" style="left: 1345.75px; top: 488px; font-size: 11px; color: rgb(201, 205, 211); letter-spacing: -0.143px;">Ctrl+Shift+⌫</span>
<svg class="a" style="left:1103px;top:525.3px;" width="14" height="12" viewBox="0 0 14 12"><path d="M5 1.200C3.600 .6 2.200 1.600 2.400 3 1.200 3.400 .7 4.900 1.500 5.900.9 7.200 1.900 8.600 3.300 8.400c.6 1.100 2.200 1.400 3.100.5h1.200c.5 0 1 .3 1.300.8l.6 1.500h1.600l-.4-2c1.400-.2 2.200-1.400 1.800-2.600.9-.8.9-2.300-.1-3C12.600 2.200 11.400 1 10 1.400 9.200 .3 7.500 .2 6.700 1.100 6.200 .8 5.500 .8 5 1.200z" fill="none" stroke="#acacac" stroke-width="1" stroke-linejoin="round"></path><path d="M4.500 3.600c.9-.5 2-.1 2.300.8M6.800 4.400c.8-.6 2-.4 2.500.5M4 6c.7.700 1.800.7 2.500 0M8.500 6.800c.3-.8 1.200-1.200 2-.9" fill="none" stroke="#acacac" stroke-width=".9" stroke-linecap="round"></path></svg>
<span class="t" style="left: 1123.75px; top: 531.5px; font-size: 13.5px; color: rgb(176, 176, 176); letter-spacing: -0.292px;">Thought for 1 second</span>
<div class="clip" style="left:1102px;top:550.5px;width:319.3px;height:241.5px;background:#fff;border:2px solid #5dade2;border-bottom:0;border-radius:8px 8px 0 0"></div>
<div class="a" style="left:1103.5px;top:791.5px;width:316.3px;height:30px;background:#f3f3f3;"></div>
<div class="a" style="left:1100px;top:791.8px;width:326px;height:27px;background:#fbfbfb;border-radius:0 0 8px 8px"></div>
<div class="clip" style="left:1113.75px;top:582px;width:306.25px;height:209.7px;background:#d6e6ae">
<div class="code dc" style="left:.5px;top:.8px"><i class="k">import</i> matplotlib
matplotlib.use<i class="b1">(</i><i class="s">'Agg'</i><i class="b1">)</i>  <i class="c"># Tkinter<i class="j">を使わないバックエンド</i></i>
<i class="k">import</i> matplotlib.pyplot <i class="k">as</i> plt
<i class="k">from</i> mpl_toolkits.mplot3d <i class="k">import</i> Axes3D
<i class="k">from</i> mpl_toolkits.mplot3d.art3d <i class="k">import</i> Poly3DCollection
<i class="k">import</i> numpy <i class="k">as</i> np

<i class="c"># 3D<i class="j">図を作成</i></i>
fig = plt.figure<i class="b1">(</i>figsize=<i class="b2">(</i><i class="n">10</i>, <i class="n">8</i><i class="b2">)</i><i class="b1">)</i>
ax = fig.add_subplot<i class="b1">(</i><i class="n">111</i>, projection=<i class="s">'3d'</i><i class="b1">)</i>

<i class="c"># <i class="j">箱の寸法</i></i>
length, width, height = <i class="n">1200</i>, <i class="n">203</i>, <i class="n">235</i></div>
</div>
<svg class="a" style="left:1116px;top:561.5px;" width="10.2" height="10.2" viewBox="0 0 16 16"><path fill="#3d7ea6" fill-rule="evenodd" d="M7.900 .4C5.500 .4 4 1.300 4 3v2h4v.7H2.800C1.200 5.700 .300 7 .300 8.600c0 1.700.9 2.900 2.400 2.900h1.700V9.300c0-1.400 1.100-2.500 2.500-2.500h3.200c1.100 0 1.900-.8 1.900-1.900V3c0-1.600-1.600-2.600-4.100-2.600zM5.800 1.900a.65.65 0 110 1.300.65.65 0 010-1.300z"></path><path fill="#4a8fb8" fill-rule="evenodd" transform="rotate(180 8 8)" d="M7.900 .4C5.500 .4 4 1.300 4 3v2h4v.7H2.800C1.200 5.700 .300 7 .300 8.600c0 1.700.9 2.900 2.400 2.900h1.700V9.300c0-1.400 1.100-2.500 2.500-2.500h3.200c1.100 0 1.900-.8 1.900-1.900V3c0-1.600-1.600-2.600-4.100-2.600zM5.800 1.900a.65.65 0 110 1.300.65.65 0 010-1.300z"></path></svg>
<span class="t" style="left: 1134.25px; top: 566.75px; font-size: 12.5px; color: rgb(102, 102, 102); letter-spacing: -0.22px;">...otter.py</span>
<span class="t" style="left: 1190px; top: 566.75px; font-size: 12.5px; color: rgb(111, 148, 64); letter-spacing: -0.603px;">(new)</span>
<span class="t" style="left: 1226.25px; top: 566.75px; font-size: 12.5px; color: rgb(93, 155, 63); letter-spacing: -0.823px;">+53</span>
<span class="t" style="left: 1251.25px; top: 566.75px; font-size: 12.5px; color: rgb(196, 69, 60); letter-spacing: -1.188px;">-1</span>
<span class="t" style="left: 1266.25px; top: 566.75px; font-size: 12.5px; color: rgb(201, 146, 46); letter-spacing: -0.664px;">•3</span>
<div class="a" style="left:1282.5px;top:564.8px;width:3.5px;height:3.5px;background:#5fba7d;border-radius:50%"></div>
<svg class="a" style="left:1357.5px;top:561px;" width="10" height="10" viewBox="0 0 10 10"><path d="M.6 .6l8.600 8.600M9.200 .6L.6 9.200" stroke="#555" stroke-width="1.1"></path></svg>
<svg class="a" style="left:1379.5px;top:561px;" width="11" height="10" viewBox="0 0 11 10"><path d="M.7 5.700l3.300 3.400L10.300.7" fill="none" stroke="#555" stroke-width="1.1"></path></svg>
<svg class="a" style="left:1402px;top:560px;" width="7" height="12" viewBox="0 0 7 12"><path d="M.8 4.300l2.700-2.800 2.700 2.800M.8 7.700l2.700 2.800 2.700-2.800" fill="none" stroke="#d4d4d4" stroke-width="1"></path></svg>
<svg class="a" style="left:1113px;top:800px;" width="5" height="9" viewBox="0 0 5 9"><path d="M.7 .7l3.500 3.700L.7 8.200" fill="none" stroke="#999" stroke-width="1"></path></svg>
<span class="t" style="left: 1125.75px; top: 805px; font-size: 12.5px; color: rgb(92, 92, 92); letter-spacing: -0.52px;">Generating...</span>
<span class="t" style="left: 1328.25px; top: 805px; font-size: 12.5px; color: rgb(180, 180, 180); letter-spacing: -0.74px;">Reject</span>
<div class="a" style="left:1369.5px;top:795px;width:46.25px;height:19.5px;background:#9297a0;border-radius:4px"></div>
<span class="t" style="left: 1375px; top: 805px; font-size: 12.5px; color: rgb(255, 255, 255); letter-spacing: -0.411px;">Accept</span>
<div class="a" style="left:1094.5px;top:818.75px;width:333.5px;height:100.75px;background:#fff;border-radius:9px"></div>
<div class="a" style="left:1102.5px;top:827px;width:91.25px;height:18.5px;background:#fff;border:1px solid #dedede;border-radius:4px"></div>
<svg class="a" style="left:1107.5px;top:831.3px;" width="11" height="11" viewBox="0 0 11 11"><path d="M7.600 5.500a2.100 2.100 0 11-4.200 0 2.100 2.100 0 014.200 0zm0-2v3c0 1.300 2.600 1.500 2.600-1A4.700 4.700 0 105.500 10.200c1 0 1.900-.3 2.600-.8" fill="none" stroke="#a8a8a8" stroke-width="1"></path></svg>
<span class="t" style="left: 1123.25px; top: 836.75px; font-size: 12.5px; color: rgb(106, 106, 106); letter-spacing: -0.229px;">Add context</span>
<span class="t" style="left: 1103.25px; top: 862px; font-size: 14px; color: rgb(198, 198, 198); letter-spacing: -0.125px;">Plan, search, build anything</span>
<div class="a" style="left:1103px;top:891.75px;width:99.5px;height:17.75px;background:#ececec;border-radius:9px"></div>
<svg class="a" style="left:1108.5px;top:897.5px;" width="12" height="6.5" viewBox="0 0 12 6.5"><path d="M6 3.200C4.800 1.400 3.900 .7 2.800 .7a2.500 2.500 0 000 5c1.100 0 2-.7 3.200-2.500zm0 0c1.200 1.800 2.100 2.500 3.200 2.500a2.500 2.500 0 000-5C8.100 .7 7.200 1.400 6 3.200z" fill="none" stroke="#ababab" stroke-width="1"></path></svg>
<span class="t" style="left: 1124.5px; top: 900.75px; font-size: 12.5px; color: rgb(154, 154, 154); font-weight: 700; letter-spacing: -0.634px;">Agent</span>
<span class="t" style="left: 1160.75px; top: 900.75px; font-size: 10.5px; color: rgb(188, 188, 188); letter-spacing: -0.273px;">Ctrl+I</span>
<svg class="a" style="left:1190.5px;top:898px;" width="7" height="5" viewBox="0 0 7 5"><path d="M.6 4.200l2.900-3 2.900 3" fill="none" stroke="#c4c4c4" stroke-width="1"></path></svg>
<svg class="a" style="left:1212px;top:895px;" width="14" height="12" viewBox="0 0 14 12"><path d="M5 1.200C3.600 .6 2.200 1.600 2.400 3 1.200 3.400 .7 4.900 1.500 5.900.9 7.200 1.900 8.600 3.300 8.400c.6 1.100 2.200 1.400 3.100.5h1.200c.5 0 1 .3 1.300.8l.6 1.500h1.600l-.4-2c1.400-.2 2.200-1.400 1.800-2.600.9-.8.9-2.300-.1-3C12.600 2.200 11.400 1 10 1.400 9.200 .3 7.500 .2 6.700 1.100 6.200 .8 5.500 .8 5 1.200z" fill="none" stroke="#c2c2c2" stroke-width="1" stroke-linejoin="round"></path><path d="M4.500 3.600c.9-.5 2-.1 2.300.8M6.800 4.400c.8-.6 2-.4 2.500.5M4 6c.7.700 1.800.7 2.500 0M8.500 6.800c.3-.8 1.200-1.200 2-.9" fill="none" stroke="#c2c2c2" stroke-width=".9" stroke-linecap="round"></path></svg>
<span class="t" style="left: 1228.25px; top: 900.75px; font-size: 12.5px; color: rgb(192, 192, 192); letter-spacing: -0.313px;">claude-3.7-sonnet</span>
<svg class="a" style="left:1327px;top:898px;" width="7" height="5" viewBox="0 0 7 5"><path d="M.6 4.200l2.900-3 2.900 3" fill="none" stroke="#d4d4d4" stroke-width="1"></path></svg>
<svg class="a" style="left:1347.5px;top:896px;" width="13" height="10" viewBox="0 0 13 10"><rect x=".6" y=".6" width="11.800" height="8.800" rx="1.2" fill="none" stroke="#a9a9a9" stroke-width="1.1"></rect><circle cx="3.600" cy="3.400" r="1" fill="#a9a9a9"></circle><path d="M1 8.600l3.400-2.800 2.200 1.600 2.200-2.300 3.400 3.500z" fill="#a9a9a9"></path></svg>
<div class="a" style="left:1369.25px;top:892px;width:51.25px;height:17.5px;background:#8ec5ea;border-radius:4px"></div>
<span class="t" style="left: 1375px; top: 900.75px; font-size: 12.5px; color: rgb(255, 255, 255); font-weight: 700; letter-spacing: -1.078px;">Send</span>
<svg class="a" style="left:1406px;top:896.5px;" width="8" height="8" viewBox="0 0 8 8"><path d="M6.800 .8v4.200H1.400M3.300 3L1.200 5l2.100 2" fill="none" stroke="#d7ecfa" stroke-width="1"></path></svg>
<div class="a" style="left:0px;top:930px;width:1440px;height:23.8px;background:#0479cc;"></div>
<div class="a" style="left:0px;top:930px;width:36.25px;height:23.8px;background:#16825d;"></div>
<svg class="a" style="left:13px;top:936.5px;" width="11" height="11" viewBox="0 0 11 11"><path d="M.8 4.200l3.600 3.300-3.600 3.200M10.300 .6L6.800 3.700l3.500 3" fill="none" stroke="#fff" stroke-width="1.1"></path></svg>
<svg class="a" style="left:45.5px;top:935px;" width="14.5" height="14.5" viewBox="0 0 14.5 14.5"><path d="M13.600 .9c-3.600 0-6.300 1.700-8 4.800L3 6.100 1 8.300l2.600.6 2 2 .6 2.600 2.200-2 .4-2.600c3.100-1.700 4.800-4.400 4.800-8z" fill="none" stroke="#fff" stroke-width="1.05" stroke-linejoin="round" stroke-linecap="round"></path><circle cx="9.500" cy="5" r="1.300" fill="none" stroke="#fff" stroke-width="1.05" stroke-linejoin="round" stroke-linecap="round"></circle><path d="M3.300 10.400c-1.200.4-1.900 1.600-2.200 3 1.400-.3 2.600-1 3-2.200" fill="none" stroke="#fff" stroke-width="1.05" stroke-linejoin="round" stroke-linecap="round"></path></svg>
<svg class="a" style="left:62px;top:936px;" width="13" height="12.5" viewBox="0 0 13 12.5"><path d="M5 4.800l2.800 2.800M4 5.800L6.800 8.600 5.300 10.100a2 2 0 01-2.800 0 2 2 0 010-2.800zM2.400 10.200L.8 11.800M8.600 3.200l1.200-1.200a2 2 0 012.800 0 2 2 0 010 2.800L11.400 6z" fill="none" stroke="#fff" stroke-width="1.05" stroke-linejoin="round" stroke-linecap="round"></path><path d="M7.800 2.400l3.600 3.600" fill="none" stroke="#fff" stroke-width="1.05" stroke-linejoin="round" stroke-linecap="round"></path></svg>
<span class="t" style="left: 79.5px; top: 942.5px; font-size: 13.5px; color: rgb(255, 255, 255); letter-spacing: -0.564px;">Launchpad</span>
<svg class="a" style="left:160px;top:935.5px;" width="14" height="14" viewBox="0 0 14 14"><circle cx="7" cy="7" r="6.100" fill="none" stroke="#fff" stroke-width="1.05" stroke-linejoin="round" stroke-linecap="round"></circle><path d="M4.600 4.600l4.800 4.800M9.400 4.600L4.600 9.400" fill="none" stroke="#fff" stroke-width="1.05" stroke-linejoin="round" stroke-linecap="round"></path></svg>
<span class="t" style="left: 178px; top: 942.5px; font-size: 13.5px; color: rgb(255, 255, 255); letter-spacing: -1.016px;">3</span>
<svg class="a" style="left:189px;top:935.5px;" width="14" height="13.5" viewBox="0 0 14 13.5"><path d="M7 1.200L13.200 12.400H.8z" fill="none" stroke="#fff" stroke-width="1.05" stroke-linejoin="round" stroke-linecap="round"></path><path d="M7 5.200v3.800M7 10.300v.9" fill="none" stroke="#fff" stroke-width="1.05" stroke-linejoin="round" stroke-linecap="round"></path></svg>
<span class="t" style="left: 207.5px; top: 942.5px; font-size: 13.5px; color: rgb(255, 255, 255); letter-spacing: -1.016px;">2</span>
<svg class="a" style="left:232.5px;top:935.5px;" width="13" height="14" viewBox="0 0 13 14"><path d="M6.500 6.200L3.600 13.200M6.500 6.200l2.900 7M4.600 10.800h3.800" fill="none" stroke="#fff" stroke-width="1.05" stroke-linejoin="round" stroke-linecap="round"></path><circle cx="6.500" cy="4.800" r="1.200" fill="none" stroke="#fff" stroke-width="1.05" stroke-linejoin="round" stroke-linecap="round"></circle><path d="M3.800 7.400a3.800 3.800 0 010-5.200M9.200 7.400a3.800 3.800 0 000-5.200M1.800 9a6.300 6.300 0 010-8.400M11.200 9a6.300 6.300 0 000-8.400" fill="none" stroke="#fff" stroke-width="1.05" stroke-linejoin="round" stroke-linecap="round"></path></svg>
<span class="t" style="left: 250px; top: 942.5px; font-size: 13.5px; color: rgb(255, 255, 255); letter-spacing: -0.766px;">0</span>
<svg class="a" style="left:275px;top:937px;" width="14" height="10" viewBox="0 0 14 10"><path d="M3.600 9.200a2.800 2.800 0 01-.3-5.600 3.900 3.900 0 017.500.7 2.500 2.500 0 01-.3 4.900z" fill="none" stroke="#fff" stroke-width="1.05" stroke-linejoin="round" stroke-linecap="round"></path></svg>
<span class="t" style="left: 293px; top: 942.5px; font-size: 13.5px; color: rgb(255, 255, 255); letter-spacing: -0.316px;">Cloud Code - Sign in</span>
<div class="a" style="left:788px;top:948px;width:37px;height:5.8px;background:#0b4f80;"></div>
<span class="t" style="left: 871.75px; top: 942.5px; font-size: 13.5px; color: rgb(255, 255, 255); letter-spacing: -0.63px;">Col 34</span>
<span class="t" style="left: 925px; top: 942.5px; font-size: 13.5px; color: rgb(255, 255, 255); letter-spacing: -0.894px;">Spaces: 4</span>
<span class="t" style="left: 995px; top: 942.5px; font-size: 13.5px; color: rgb(255, 255, 255); letter-spacing: -0.9px;">UTF-8</span>
<span class="t" style="left: 1046.25px; top: 942.5px; font-size: 13.5px; color: rgb(255, 255, 255); letter-spacing: -1.5px;">CRLF</span>
<span class="t" style="left: 1091.25px; top: 941.8px; font-size: 13px; color: rgb(255, 255, 255); letter-spacing: 1.656px;" liberation="" mono",monospace;font-weight:700;"="">{}</span>
<span class="t" style="left: 1111.25px; top: 942.5px; font-size: 13.5px; color: rgb(255, 255, 255); letter-spacing: -0.422px;">Python</span>
<span class="t" style="left: 1166.75px; top: 942.5px; font-size: 13.5px; color: rgb(255, 255, 255); letter-spacing: -0.475px;">3.13.2 ('venv': venv)</span>
<span class="t" style="left: 1293.75px; top: 942.5px; font-size: 13.5px; color: rgb(255, 255, 255); letter-spacing: -0.503px;">Cursor Tab</span>
<div class="a" style="left:1362.5px;top:930px;width:37px;height:23.8px;background:#76570f;"></div>
<svg class="a" style="left:1373.5px;top:934.5px;" width="15" height="15" viewBox="0 0 15 15"><path d="M2 2.500l11.500 10M4.500 10.500l-2.700 2.700M7.300 5.200l3.200-2.800 2 2.200-3 2.800M5.200 6.800L4 8l2.600 2.800 1.300-1.100" fill="none" stroke="#fff" stroke-width="1.3" stroke-linecap="round"></path></svg>
<svg class="a" style="left:1410px;top:935px;" width="13" height="14.5" viewBox="0 0 13 14.5"><path d="M6.500 1.200c-2.400 0-4 1.800-4 4v3.400L1 11h11l-1.500-2.400V5.200c0-2.200-1.600-4-4-4zM5 12.400c.2.900.8 1.300 1.500 1.300s1.300-.4 1.500-1.300" fill="none" stroke="#fff" stroke-width="1.05" stroke-linejoin="round" stroke-linecap="round"></path></svg>
<div class="a" style="left:0;top:953.8px;width:1440px;height:36.2px;background:linear-gradient(90deg,#dde1ea 0%,#dce0ea 28%,#e4e3ee 45%,#f1e5ea 62%,#ebe3ee 76%,#dfe6f2 90%,#dde6f3 100%)"></div>
<div class="a" style="left:545px;top:963.75px;width:8.2px;height:8.2px;background:#2aa4ea;border-radius:1px"></div>
<div class="a" style="left:554px;top:963.75px;width:8.2px;height:8.2px;background:#2b9be6;border-radius:1px"></div>
<div class="a" style="left:545px;top:972.75px;width:8.2px;height:8.2px;background:#1f8fe0;border-radius:1px"></div>
<div class="a" style="left:554px;top:972.75px;width:8.2px;height:8.2px;background:#1a86dc;border-radius:1px"></div>
<div class="a" style="left:573px;top:960.75px;width:162.5px;height:22.5px;background:#f4f4f9;border:1px solid #d9d9e2;border-radius:11.5px"></div>
<svg class="a" style="left:581px;top:966px;" width="12" height="12" viewBox="0 0 12 12"><circle cx="5" cy="5" r="4" fill="none" stroke="#222" stroke-width="1.3"></circle><path d="M8 8l3.200 3.200" stroke="#222" stroke-width="1.4" stroke-linecap="round"></path></svg>
<span class="t" style="left: 600px; top: 971.2px; font-size: 10.5px; color: rgb(90, 90, 90); letter-spacing: -0.25px;">検索</span>
<svg class="a" style="left:697px;top:962px;" width="38" height="20" viewBox="0 0 38 20"><ellipse cx="19" cy="12" rx="18" ry="7.500" fill="#2f9dc2"></ellipse><ellipse cx="19" cy="10.500" rx="17" ry="6.500" fill="#e9dc8a"></ellipse><ellipse cx="19" cy="10" rx="14" ry="4.800" fill="#6cc7c0"></ellipse><rect x="8" y="4" width="8" height="5" rx="2" fill="#7a63c9" transform="rotate(-18 12 6)"></rect><rect x="17" y="3" width="9" height="5" rx="2" fill="#e06aa8" transform="rotate(12 21 5)"></rect><rect x="24" y="6" width="7" height="4" rx="2" fill="#58b65a"></rect><rect x="12" y="8" width="7" height="3.500" rx="1.700" fill="#f0c040"></rect></svg>
<div class="a" style="left:751px;top:963.75px;width:13.5px;height:12px;background:#f4f4f4;border-radius:1.5px"></div>
<div class="a" style="left:745.5px;top:967.5px;width:13.5px;height:12.5px;background:#262626;border-radius:1.5px"></div>
<div class="a" style="left:752px;top:967.5px;width:7px;height:8px;background:#bdbdbd;"></div>
<svg class="a" style="left:778.8px;top:962.8px;" width="19.0" height="19.0" viewBox="0 0 20 20"><circle cx="10" cy="10" r="9.600" fill="#e8453c"></circle><path d="M10 10L1.700 5.200A9.600 9.600 0 0010 19.600z" fill="#34a853"></path><path d="M10 10v9.600A9.600 9.600 0 0018.300 5.200z" fill="#fbc116"></path><path d="M10 10L1.700 5.200A9.600 9.600 0 0118.300 5.200z" fill="#e8453c"></path><circle cx="10" cy="10" r="4.500" fill="#fff"></circle><circle cx="10" cy="10" r="3.600" fill="#4285f4"></circle></svg>
<div class="a" style="left:789.7px;top:959.7px;width:11.4px;height:11.4px;background:#e8711c;border-radius:50%"></div>
<span class="t" style="left:793.6px;top:965.6px;font-size:7.5px;color:#fff;">k</span>
<div class="a" style="left:786px;top:984.5px;width:4.5px;height:1.6px;background:#8a8a8a;border-radius:1px"></div>
<svg class="a" style="left:811.5px;top:963px;" width="19.5" height="17.5" viewBox="0 0 19.5 17.5"><path d="M1 2.200C1 1.500 1.500 1 2.200 1h4.600l1.800 1.800h8.800c.7 0 1.200.5 1.200 1.200V6H1z" fill="#e9a820"></path><rect x=".6" y="3.600" width="18.300" height="13" rx="1.300" fill="#fbd14b"></rect><rect x="4.500" y="10.800" width="10.500" height="5.800" rx="1" fill="#2f8de0"></rect><rect x="6" y="12.400" width="7.500" height="1.500" fill="#8cc4f5"></rect></svg>
<div class="a" style="left:819px;top:984.5px;width:4.5px;height:1.6px;background:#8a8a8a;border-radius:1px"></div>
<div class="a" style="left:840px;top:958.75px;width:27.5px;height:26.75px;background:#f6f2f5;border:1px solid #ecebf0;border-radius:4px"></div>
<div class="a" style="left:846.75px;top:964px;width:15px;height:15.5px;background:#0c0c0c;border-radius:3.500px"></div>
<svg class="a" style="left:849.5px;top:966.5px;" width="9.5" height="10.5" viewBox="0 0 9.5 10.5"><path d="M4.750 .5L9 2.800v4.900L4.750 10 .5 7.700V2.800z" fill="#fff"></path><path d="M4.750 5.200L9 2.800 4.750 10z" fill="#9a9a9a"></path><path d="M4.750 5.200L.5 2.800V7.700L4.750 10z" fill="#222" stroke="#fff" stroke-width=".5"></path></svg>
<div class="a" style="left:848.75px;top:984.3px;width:11.25px;height:2px;background:#1a78d2;border-radius:1px"></div>
<svg class="a" style="left:877.5px;top:962.8px;" width="19.0" height="19.0" viewBox="0 0 20 20"><circle cx="10" cy="10" r="9.600" fill="#e8453c"></circle><path d="M10 10L1.700 5.200A9.600 9.600 0 0010 19.600z" fill="#34a853"></path><path d="M10 10v9.600A9.600 9.600 0 0018.300 5.200z" fill="#fbc116"></path><path d="M10 10L1.700 5.200A9.600 9.600 0 0118.300 5.200z" fill="#e8453c"></path><circle cx="10" cy="10" r="4.500" fill="#fff"></circle><circle cx="10" cy="10" r="3.600" fill="#4285f4"></circle></svg>
<div class="a" style="left:888.4px;top:958.9px;width:12px;height:12px;background:#4aa0e6;border-radius:50%"></div>
<svg class="a" style="left:890.4px;top:961.8px;" width="8" height="6" viewBox="0 0 8 6"><path d="M1.500 4.500a1.300 1.300 0 010-2.600 2 2 0 013.800-.2 1.400 1.400 0 010 2.800z" fill="#fff"></path></svg>
<div class="a" style="left:885px;top:984.5px;width:4.5px;height:1.6px;background:#8a8a8a;border-radius:1px"></div>
<svg class="a" style="left:1143.5px;top:969px;" width="10" height="6" viewBox="0 0 10 6"><path d="M.8 5l4-4 4 4" fill="none" stroke="#222" stroke-width="1.05" stroke-linecap="round" stroke-linejoin="round"></path></svg>
<svg class="a" style="left:1165px;top:965px;" width="14" height="13" viewBox="0 0 14 13"><rect x=".5" y="4.500" width="7" height="8" rx="1" fill="#d8232a"></rect><rect x="2.800" y="6.200" width="2" height="4.500" fill="#fff"></rect><path d="M9 1.500v4M7 3.500h4M11.500 4.800v3M10 6.300h3M9 8.500v3" stroke="#333" stroke-width="1.300"></path><path d="M2 2.200h4v1.600H2z" fill="#444"></path></svg>
<svg class="a" style="left:1190px;top:966px;" width="13" height="11" viewBox="0 0 13 11"><path d="M3.500 9.300a2.500 2.500 0 01-.2-5 3.600 3.600 0 016.900.7 2.300 2.300 0 01-.3 4.300z" fill="none" stroke="#222" stroke-width="1.05" stroke-linecap="round" stroke-linejoin="round"></path><path d="M1.200 1l10.600 9.300" stroke="#222" stroke-width="1.200"></path></svg>
<svg class="a" style="left:1215.5px;top:965px;" width="10" height="14" viewBox="0 0 10 14"><rect x="3" y=".6" width="4" height="8" rx="2" fill="none" stroke="#2d6fd0" stroke-width="1.100"></rect><path d="M1 6.500a4 4 0 008 0M5 10.500v2.700" fill="none" stroke="#2d6fd0" stroke-width="1.100"></path></svg>
<svg class="a" style="left:1238px;top:966px;" width="13" height="11.5" viewBox="0 0 13 11.5"><rect x=".6" y="1.800" width="11.800" height="9" rx="1.200" fill="none" stroke="#2d6fd0" stroke-width="1.100"></rect><path d="M3.800 .5v2.600M2.500 1.800h2.600" stroke="#2d6fd0" stroke-width="1"></path><path d="M6.500 5.200l.7 1.500 1.500.7-1.500.7-.7 1.500-.7-1.500-1.500-.7 1.500-.7z" fill="#2d6fd0"></path></svg>
<span class="t" style="left: 1264.5px; top: 972px; font-size: 9.5px; color: rgb(181, 181, 181); letter-spacing: 1.156px;">A</span>
<div class="a" style="left:1290.5px;top:966px;width:11.5px;height:11.5px;background:#2273d8;border-radius:50%"></div>
<div class="a" style="left:1297.5px;top:973.5px;width:5px;height:5px;background:#e8711c;border-radius:50%"></div>
<div class="a" style="left:1299.5px;top:970.5px;width:3.5px;height:3.5px;background:#e33b2e;border-radius:50%"></div>
<svg class="a" style="left:1318.5px;top:965.5px;" width="14" height="13" viewBox="0 0 14 13"><rect x=".6" y="1.200" width="9.500" height="7.500" rx=".8" fill="none" stroke="#222" stroke-width="1.05" stroke-linecap="round" stroke-linejoin="round"></rect><path d="M3.300 11.500h4.500M5.500 8.700v2.800" fill="none" stroke="#222" stroke-width="1.05" stroke-linecap="round" stroke-linejoin="round"></path><rect x="9.300" y="3.500" width="3.500" height="8.500" rx=".8" fill="#eee" stroke="#222" stroke-width="1"></rect><circle cx="11" cy="2" r="1.200" fill="none" stroke="#222" stroke-width="1.05" stroke-linecap="round" stroke-linejoin="round"></circle></svg>
<svg class="a" style="left:1337px;top:966px;" width="13" height="11.5" viewBox="0 0 13 11.5"><path d="M.8 4h2.200l3-2.800v9.100l-3-2.800H.8z" fill="none" stroke="#222" stroke-width="1.05" stroke-linecap="round" stroke-linejoin="round"></path><path d="M7.800 3.700a2.800 2.800 0 010 4M9.500 2.200a5 5 0 010 7M11.200 .9a7 7 0 010 9.700" fill="none" stroke="#222" stroke-width="1.05" stroke-linecap="round" stroke-linejoin="round"></path></svg>
<svg class="a" style="left:1355px;top:966px;" width="13" height="12" viewBox="0 0 13 12"><rect x=".6" y="2.500" width="10" height="6" rx="1.200" fill="none" stroke="#222" stroke-width="1.050"></rect><path d="M2.500 1.500l2 1M7 1.500l-1.500 1" stroke="#222" stroke-width="1"></path><path d="M7.500 7l2.300 3.500 2.400-3.500z" fill="#222"></path><path d="M3 4.500h4.500M3 6.500h3" stroke="#222" stroke-width="1"></path></svg>
<span class="t" style="left: 1405px; top: 965.75px; font-size: 9px; color: rgb(34, 34, 34); letter-spacing: -0.406px;">12:00</span>
<span class="t" style="left: 1380.5px; top: 978px; font-size: 9px; color: rgb(34, 34, 34); letter-spacing: -0.005px;">2025/04/13</span>
<div class="a" style="left:568px;top:910.75px;width:303.75px;height:37.25px;background:#f5f8fc;border:1px solid #e9edf2;box-shadow:0 0 2px rgba(0,0,0,.10)"></div>
<div class="a" style="left:577px;top:924.5px;width:1px;height:9.5px;background:#c4c4c4;"></div>
<div class="a" style="left:579.7px;top:924.5px;width:1px;height:9.5px;background:#c4c4c4;"></div>
<span class="t" style="left: 588.25px; top: 929.5px; font-size: 9.3px; color: rgb(45, 45, 45); transform-origin: 0px 50%; transform: scaleX(0.871);">meet.google.com が画面を共有しています。</span>
<div class="a" style="left:758.25px;top:915px;width:71px;height:28.25px;background:#0b57d0;border-radius:14.5px"></div>
<span class="t" style="left: 770.5px; top: 929.5px; font-size: 9.3px; color: rgb(255, 255, 255); font-weight: 700; letter-spacing: -0.15px;">共有を停止</span>
<span class="t" style="left: 837.5px; top: 929.8px; font-size: 8.8px; color: rgb(11, 87, 208); text-decoration: underline; text-underline-offset: 1.5px; letter-spacing: -0.052px;">非表示</span>
<svg class="a" style="left:1443px;top:406px" width="477" height="268" viewBox="0 0 477 268">
<defs>
<filter id="b1" x="-10%" y="-10%" width="120%" height="120%"><feGaussianBlur stdDeviation="1"></feGaussianBlur></filter>
<filter id="b2" x="-20%" y="-20%" width="140%" height="140%"><feGaussianBlur stdDeviation="2.200"></feGaussianBlur></filter>
<filter id="b4" x="-30%" y="-30%" width="160%" height="160%"><feGaussianBlur stdDeviation="4.500"></feGaussianBlur></filter>
<filter id="b8" x="-30%" y="-30%" width="160%" height="160%"><feGaussianBlur stdDeviation="10"></feGaussianBlur></filter>
<linearGradient id="wall" x1="0" x2="1" y1="0" y2="0">
<stop offset="0" stop-color="#dddcd7"></stop><stop offset=".17" stop-color="#dbd9d2"></stop><stop offset=".235" stop-color="#d2cabc"></stop>
<stop offset=".30" stop-color="#d8cfbf"></stop><stop offset=".64" stop-color="#d7cdbc"></stop><stop offset=".66" stop-color="#dcd3c3"></stop><stop offset="1" stop-color="#d9d0c1"></stop>
</linearGradient>
<linearGradient id="shade" x1="0" x2="0" y1="0" y2="1"><stop offset="0" stop-color="#000" stop-opacity="0"></stop><stop offset="1" stop-color="#000" stop-opacity=".5"></stop></linearGradient>
<linearGradient id="skin" x1="0" x2="0" y1="0" y2="1"><stop offset="0" stop-color="#c8a994"></stop><stop offset=".5" stop-color="#bb9a86"></stop><stop offset=".78" stop-color="#ae9583"></stop><stop offset="1" stop-color="#a69a8e"></stop></linearGradient>
<clipPath id="tile"><rect width="477" height="268"></rect></clipPath>
</defs>
<g clip-path="url(#tile)">
<rect width="477" height="268" fill="url(#wall)"></rect>
<ellipse cx="395" cy="120" rx="60" ry="80" fill="#e4dccd" filter="url(#b8)"></ellipse>
<ellipse cx="40" cy="40" rx="60" ry="50" fill="#e2e1dd" filter="url(#b8)"></ellipse>
<ellipse cx="150" cy="225" rx="70" ry="36" fill="#cdc2b0" filter="url(#b8)"></ellipse>
<rect x="305.500" y="0" width="1.600" height="215" fill="#b3a791" filter="url(#b1)"></rect>
<g filter="url(#b1)">
  <!-- jacket -->
  <path d="M120 268c4-10 10-20 20-26 6-5 12-7 20-8l30-3 12-8 11-12 8 18 16 22 20 17h26l22-22 6-24 3-13 10 10 10 8 12 12 20 14 24 12 16 12z" fill="#16171b"></path>
  <!-- neck -->
  <path d="M224 205h68l2 30-10 24-40 4-18-24z" fill="#a08370"></path>
  <path d="M226 220c14 10 44 10 64-2l-2 16c-18 10-44 10-60 0z" fill="#866b5a"></path>
  <!-- inner shirt -->
  <path d="M208 238l14 2 22 28h-40z" fill="#20212b"></path>
  <path d="M284 268l12-30 8 30z" fill="#23243a"></path>
  <path d="M191 242l17-4 6 30h-26z" fill="#8d94a2"></path>
  <path d="M297 240l5 28h-14z" fill="#6f9fcb"></path>
  <!-- head band -->
  <path d="M173 124c-3-38 26-70 78-71 54-1 86 32 82 72" fill="none" stroke="#24242a" stroke-width="4.200"></path>
  <path d="M180 122c0-32 26-58 72-59" fill="none" stroke="#2a2a30" stroke-width="2.400"></path>
  <!-- hair -->
  <path d="M188 124c-7-14-3-38 11-53 12-13 31-21 52-21 23 0 44 9 55 24 9 13 11 33 6 50l-11 6c0-22-6-38-18-46-20-7-44-6-62 3-10 8-13 22-14 38z" fill="#363635"></path>
  <path d="M212 82c18-12 46-13 72-3-22-3-48-3-72 3z" fill="#77746f"></path>
  <path d="M232 64c14-4 30-4 44 1" fill="none" stroke="#55534f" stroke-width="2"></path>
  <!-- face -->
  <path d="M203 120c-1-20 8-34 24-40 16-5 38-5 54 1 16 7 22 21 21 41-1 22-5 46-13 66-8 20-20 38-38 38-20 0-32-18-39-40-5-20-8-44-9-66z" fill="url(#skin)"></path>
  <!-- stubble -->
  <path d="M217 186c6 22 18 40 34 40s30-18 38-42c-2 10-6 16-12 18-16 6-34 6-50 0-4-2-8-8-10-16z" fill="#a29c94"></path>
  <path d="M232 176c10-5 28-5 38 0l4 12c-12-6-34-6-46 0z" fill="#9d8c80"></path>
  <!-- shadows on face sides -->
  <path d="M204 128c2 30 8 56 18 76-2-26-6-50-8-76z" fill="#9a7f6c" fill-opacity=".7"></path>
  <path d="M301 128c-2 30-8 56-18 76 2-26 6-50 8-76z" fill="#9a7f6c" fill-opacity=".7"></path>
  <!-- ear cups -->
  <ellipse cx="184.500" cy="153.500" rx="20.500" ry="33" fill="#1b1d1c"></ellipse>
  <ellipse cx="191" cy="153.500" rx="12.500" ry="28" fill="#292b2a"></ellipse>
  <ellipse cx="191" cy="153.500" rx="7" ry="20" fill="#1f2120"></ellipse>
  <ellipse cx="319" cy="156.500" rx="19.500" ry="33.500" fill="#1b1d1c"></ellipse>
  <ellipse cx="313" cy="156.500" rx="11.500" ry="28" fill="#2a2c2b"></ellipse>
  <ellipse cx="314" cy="150" rx="4" ry="10" fill="#55595a"></ellipse>
  <path d="M329 134c7 8 10 32 4 48l5-4c5-14 5-32-1-44z" fill="#565e86"></path>
  <rect x="170" y="108" width="6" height="18" rx="2" fill="#1e1e26"></rect>
  <rect x="328" y="108" width="6" height="18" rx="2" fill="#1e1e26"></rect>
  <!-- glasses -->
  <ellipse cx="224" cy="130" rx="21.500" ry="15" fill="#a78b7b" fill-opacity=".4" stroke="#4a423e" stroke-width="2"></ellipse>
  <ellipse cx="279" cy="130" rx="21" ry="15" fill="#a78b7b" fill-opacity=".4" stroke="#4a423e" stroke-width="2"></ellipse>
  <path d="M245.500 126c3-2 9-2 12.500 0M202.500 126l-9-2M300 126l8-2" fill="none" stroke="#4a423e" stroke-width="1.800"></path>
  <path d="M210 113c7-4 18-4 26-1M264 112c8-3 20-3 28 1" fill="none" stroke="#4a3e38" stroke-width="2.600"></path>
  <ellipse cx="223" cy="129.500" rx="7.500" ry="3.200" fill="#3a2c2c"></ellipse><ellipse cx="277" cy="129.500" rx="7.500" ry="3.200" fill="#3a2c2c"></ellipse>
  <ellipse cx="223" cy="134" rx="13" ry="5" fill="#8f7466" fill-opacity=".55"></ellipse><ellipse cx="278" cy="134" rx="13" ry="5" fill="#8f7466" fill-opacity=".55"></ellipse>
  <!-- nose / mouth -->
  <path d="M252 128c0 10-1 22 0 32" fill="none" stroke="#d0b09c" stroke-width="5" stroke-opacity=".7"></path>
  <path d="M240 160c2 6 20 6 24 0" fill="none" stroke="#9a7764" stroke-width="2.400"></path>
  <path d="M236 183c8-5 20-5 30 0-8 6-22 6-30 0z" fill="#87544f"></path>
  <!-- mic -->
  <path d="M322 173l-40 15.500" stroke="#77787d" stroke-width="2.400" fill="none"></path>
  <ellipse cx="269.700" cy="195" rx="13.500" ry="9.500" transform="rotate(-16 269.700 195)" fill="#161817"></ellipse>
  <path d="M321 186v48" stroke="#2a2a2e" stroke-width="2.200"></path>
</g>
<rect x="0" y="228" width="477" height="40" fill="url(#shade)"></rect>
</g>
<text x="13" y="257.500" font-family="'Liberation Sans','Noto Sans CJK JP',sans-serif" font-size="17.500" fill="#fff" fill-opacity=".95">小川慶一</text>
</svg>

</body></html>
